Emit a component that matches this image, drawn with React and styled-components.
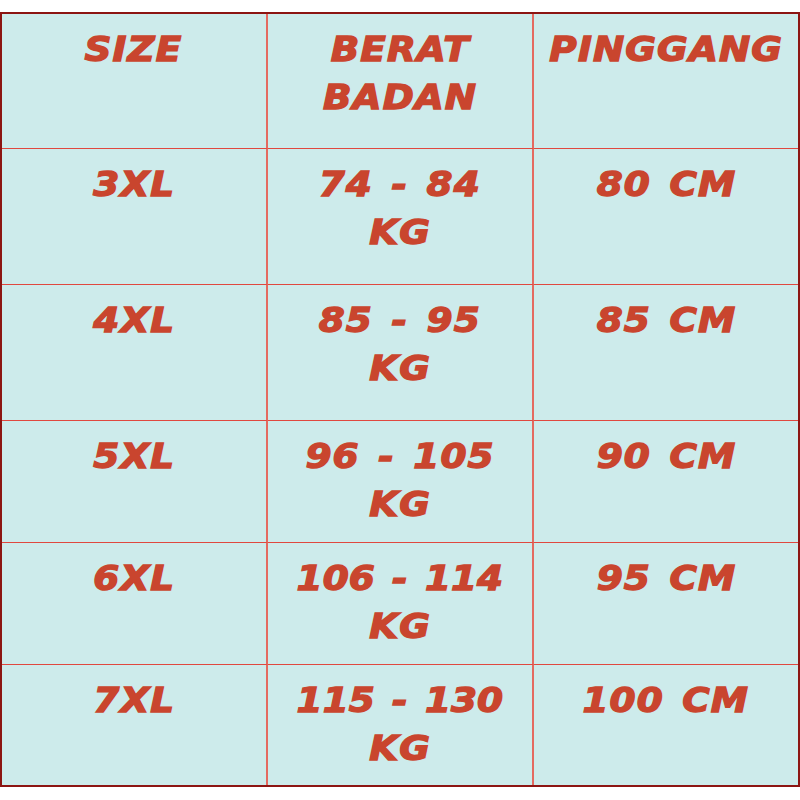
import styled, { createGlobalStyle } from 'styled-components';

const Global = createGlobalStyle`
    html, body {
        margin: 0;
        padding: 0;
        background: #fff;
    }
`

const Page = styled.div`
    width: 800px;
    height: 800px;
    padding-top: 12px;
    box-sizing: border-box;
`

const Table = styled.div`
    display: grid;
    grid-template-columns: 266px 266px 1fr;
    grid-template-rows: 135px 136px 136px 122px 122px 120px;
    width: 800px;
    box-sizing: border-box;
    border: 2px solid #8c1512;
    background: #cdebeb;
`

const Cell = styled.div`
    display: flex;
    flex-direction: column;
    align-items: center;
    padding-top: 11px;
    box-sizing: border-box;
    border-right: ${props => props.last ? 'none' : '2px solid #e46a60'};
    border-bottom: ${props => props.bottom ? 'none' : '1px solid #e0483f'};
`

const Line = styled.span`
    display: block;
    font-family: "DejaVu Sans", sans-serif;
    font-weight: bold;
    font-style: italic;
    font-size: 34px;
    line-height: 48px;
    letter-spacing: ${props => props.tight ? '0px' : '1px'};
    word-spacing: 4px;
    color: #c9452e;
    -webkit-text-stroke: 1.4px #c9452e;
    white-space: pre;
    transform: scaleX(1.1);
`

const header = [['SIZE'], ['BERAT', 'BADAN'], ['PINGGANG']]

const rows = [
    ['3XL', '74 - 84', '80 CM'],
    ['4XL', '85 - 95', '85 CM'],
    ['5XL', '96 - 105', '90 CM'],
    ['6XL', '106 - 114', '95 CM'],
    ['7XL', '115 - 130', '100 CM'],
]

export default function App() {
    return (
        <Page>
            <Global />
            <Table>
                {header.map((lines, i) => (
                    <Cell key={'h' + i} last={i === 2}>
                        {lines.map(l => <Line key={l}>{l}</Line>)}
                    </Cell>
                ))}
                {rows.map((row, r) => {
                    const end = r === rows.length - 1
                    return [
                        <Cell key={r + 'a'} bottom={end}>
                            <Line>{row[0]}</Line>
                        </Cell>,
                        <Cell key={r + 'b'} bottom={end}>
                            <Line tight={row[1].length > 8}>{row[1]}</Line>
                            <Line>KG</Line>
                        </Cell>,
                        <Cell key={r + 'c'} last bottom={end}>
                            <Line>{row[2]}</Line>
                        </Cell>,
                    ]
                })}
            </Table>
        </Page>
    )
}
